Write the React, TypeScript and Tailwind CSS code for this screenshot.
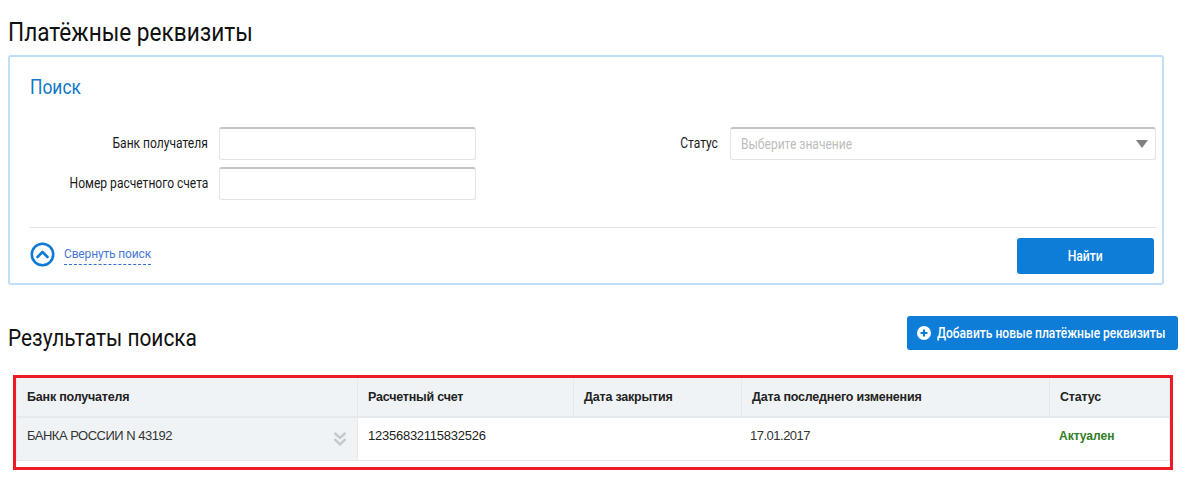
const columns = [
  { title: 'Банк получателя', width: 'w-[341px]' },
  { title: 'Расчетный счет', width: 'w-[216px]' },
  { title: 'Дата закрытия', width: 'w-[168px]' },
  { title: 'Дата последнего изменения', width: 'w-[308px]' },
  { title: 'Статус', width: 'flex-1' },
]

function FieldLabel({ text, width }: { text: string; width: string }) {
  return (
    <label className={`${width} shrink-0 text-right text-[14px] text-[#1a1a1a]`}>
      <span className="inline-block origin-right scale-x-[0.86] whitespace-nowrap">{text}</span>
    </label>
  )
}

function TextField() {
  return <div className="h-[33px] w-[257px] rounded-[3px] border border-[#e3e3e3] border-t-2 border-t-[#c4c4c4] bg-white" />
}

export default function App() {
  return (
    <div className="h-[477px] w-[1190px] overflow-hidden bg-white pl-2 font-['Roboto',sans-serif]">
      <h1 className="flex h-[55px] items-center pt-[9px] text-[26px] leading-none text-[#111]">
        <span className="origin-left scale-x-[0.87] whitespace-nowrap">Платёжные реквизиты</span>
      </h1>

      <section className="h-[230px] w-[1156px] rounded-[3px] border-2 border-[#c0dff7] pl-5 pr-[6px]">
        <h2 className="pt-[17px] text-[20px] leading-[26px] text-[#0f78c8]">
          <span className="inline-block origin-left scale-x-[0.87]">Поиск</span>
        </h2>
        <div className="mt-[27px] flex h-[72px] items-start">
          <div className="flex flex-col gap-[7px]">
            <div className="flex items-center gap-[11px]">
              <FieldLabel text="Банк получателя" width="w-[178px]" />
              <TextField />
            </div>
            <div className="flex items-center gap-[11px]">
              <FieldLabel text="Номер расчетного счета" width="w-[178px]" />
              <TextField />
            </div>
          </div>
          <div className="flex items-center gap-[12px]">
            <FieldLabel text="Статус" width="w-[242px]" />
            <div className="flex h-[33px] w-[426px] items-center justify-between rounded-[3px] border border-[#e3e3e3] border-t-2 border-t-[#c4c4c4] bg-white pl-[10px] pr-[7px]">
              <span className="origin-left scale-x-[0.86] whitespace-nowrap text-[14px] text-[#bdbdbd]">Выберите значение</span>
              <span className="h-0 w-0 border-x-[6px] border-t-[8px] border-x-transparent border-t-[#808080]" />
            </div>
          </div>
        </div>
        <div className="mt-[28px] flex items-start justify-between border-t border-[#e4e4e4] pt-[10px]">
          <div className="flex items-center gap-[9px] pt-[4px]">
            <svg width="25" height="25" viewBox="0 0 25 25" fill="none">
              <circle cx="12.5" cy="12.5" r="10.7" stroke="#0f7ad6" strokeWidth="2.6" />
              <path d="M7.5 15 L12.5 10 L17.5 15" stroke="#0f7ad6" strokeWidth="2.6" strokeLinecap="round" strokeLinejoin="round" />
            </svg>
            <span className="border-b border-dashed border-[#2f6fd0] pb-px text-[12px] leading-[18px] tracking-[-0.15px] text-[#4a78d6]">Свернуть поиск</span>
          </div>
          <button type="button" className="mr-[2px] h-9 w-[137px] rounded-[3px] bg-[#0d7dd8] text-[14px] font-medium text-white">
            <span className="inline-block scale-x-[0.87]">Найти</span>
          </button>
        </div>
      </section>

      <div className="mt-[31px] flex h-[34px] w-[1170px] items-center justify-between">
        <h2 className="pt-[10px] text-[24px] leading-none text-[#111]">
          <span className="inline-block origin-left scale-x-[0.87] whitespace-nowrap">Результаты поиска</span>
        </h2>
        <button type="button" className="flex h-[34px] w-[271px] items-center gap-[6px] rounded-[3px] bg-[#0d7dd8] pl-[10px] text-[14px] font-medium text-white">
          <svg width="14" height="14" viewBox="0 0 14 14" className="shrink-0">
            <circle cx="7" cy="7" r="7" fill="#fff" />
            <path d="M7 3.5 V10.5 M3.5 7 H10.5" stroke="#0d7dd8" strokeWidth="2.2" />
          </svg>
          <span className="origin-left scale-x-[0.86] whitespace-nowrap">Добавить новые платёжные реквизиты</span>
        </button>
      </div>

      <div className="ml-[5px] mt-[25px] h-[95px] w-[1160px] border-[3px] border-[#ed1c24] font-['Liberation_Sans',Arial,sans-serif]">
        <div className="w-[1154px] border border-t-0 border-[#e4e9ee]">
          <div className="flex h-[40px] border-b-2 border-[#e4e9ee] bg-[#f0f3f6]">
            {columns.map((col) => (
              <div key={col.title} className={`${col.width} flex items-center border-r border-[#e4e9ee] pl-[10px] pt-px text-[12.5px] font-bold tracking-[-0.2px] text-[#222] last:border-r-0`}>
                {col.title}
              </div>
            ))}
          </div>
          <div className="flex h-[42px] items-stretch text-[13px] text-[#333]">
            <div className="relative flex w-[341px] items-center border-r border-[#e4e9ee] bg-[#f0f3f6] pb-[6px] pl-[10px] tracking-[-0.5px]">
              БАНКА РОССИИ N 43192
              <svg width="14" height="14" viewBox="0 0 14 14" fill="none" className="absolute right-[10px] top-[14px]">
                <path d="M1.5 1 L7 6 L12.5 1 M1.5 7 L7 12.5 L12.5 7" stroke="#c3c8cc" strokeWidth="2.4" />
              </svg>
            </div>
            <div className="flex w-[216px] items-center pb-[6px] pl-[10px] tracking-[-0.25px] text-[#222]">12356832115832526</div>
            <div className="w-[168px]" />
            <div className="flex w-[308px] items-center pb-[6px] pl-[8px] tracking-[-0.5px]">17.01.2017</div>
            <div className="flex flex-1 items-center pb-[6px] pl-[9px] text-[12px] font-bold text-[#2f7d1e]">Актуален</div>
          </div>
        </div>
      </div>
    </div>
  )
}
